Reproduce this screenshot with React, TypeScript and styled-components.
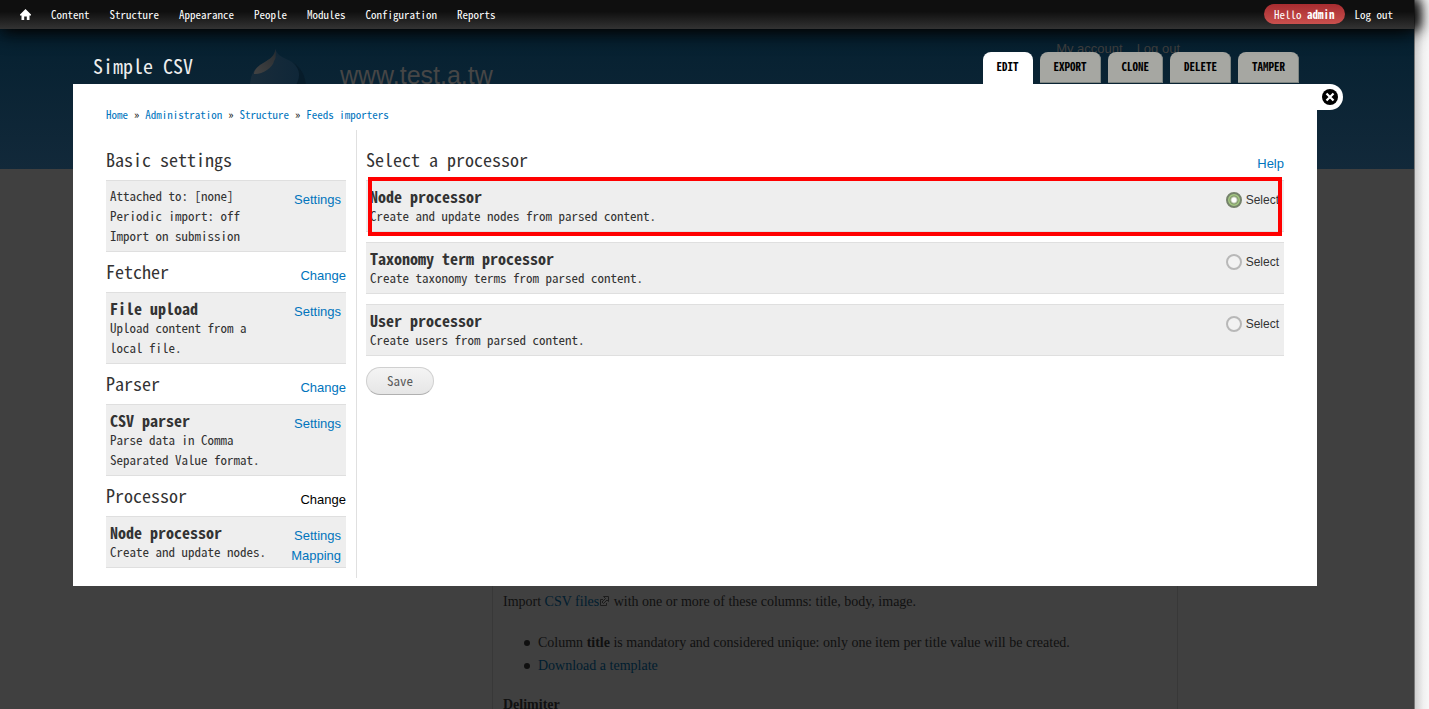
import React from "react";
import styled, { createGlobalStyle, css } from "styled-components";

const mono = `"Noto Sans Mono CJK TC", "Liberation Mono", monospace`;
const sans = `"Liberation Sans", Arial, sans-serif`;
const serif = `"Liberation Serif", "Times New Roman", serif`;
const linkBlue = "#0074bd";

const GlobalStyle = createGlobalStyle`
  * { box-sizing: border-box; }
  body { margin: 0; font-family: ${mono}; font-size: 13px; line-height: 20px; color: #333; }
  a { text-decoration: none; }
  h1, h2, h3, p, ul, ol { margin: 0; padding: 0; font-weight: normal; }
`;

const Shell = styled.div`
  display: flex;
  height: 100vh;
  overflow: hidden;
`;

const Viewport = styled.div`
  position: relative;
  flex: 1;
  min-width: 0;
  background: #404040;
`;

const ScrollTrack = styled.div`
  width: 15px;
  border-left: 1px solid #7a7a7a;
  background: linear-gradient(to right, #cfcfcf, #f0f0f0 60%, #f8f8f8);
`;

/* Admin toolbar */

const Toolbar = styled.nav`
  position: relative;
  z-index: 3;
  display: flex;
  align-items: center;
  justify-content: space-between;
  height: 29px;
  padding: 0 21px 1px 20px;
  background: linear-gradient(#0f0f0f 40%, #333);
  box-shadow: 0 3px 20px #000, 6px 0 12px #111;
  font-size: 11px;
`;

const MenuList = styled.div`
  display: flex;
  align-items: center;
  gap: 20px;
`;

const UserMenu = styled(MenuList)`
  gap: 10px;
`;

const MenuLink = styled.a`
  display: flex;
  color: #fff;
`;

const Greeting = styled.a`
  padding: 0 10px;
  border-radius: 10px;
  background: linear-gradient(#a82c30, #c9504e);
  color: #fff;
  white-space: pre;
`;

/* Dimmed site page under the overlay */

const SiteHeader = styled.header`
  height: 140px;
  background: linear-gradient(#052030, #12293a);
`;

const SiteContainer = styled.div`
  display: flex;
  width: 960px;
  margin: 0 auto;
`;

const Brand = styled.div`
  display: flex;
  flex: 1;
  gap: 32px;
  padding: 20px 0 0 20px;
`;

const SiteName = styled.span`
  padding-top: 10px;
  font-family: ${sans};
  font-size: 25px;
  line-height: 32px;
  color: #464646;
`;

const AccountLinks = styled.div`
  display: flex;
  gap: 14px;
  padding: 10px 7px 0 0;
  font-family: ${sans};
  font-size: 13px;
`;

const AccountLink = styled.a`
  color: #404040;
`;

const SiteContent = styled.main`
  width: 686px;
  margin-left: 265px;
  padding: 421px 10px 0;
  border: solid #383838;
  border-width: 0 1px;
  font-family: ${serif};
  font-size: 14px;
  line-height: 23px;
  color: #101010;
`;

const SiteLink = styled.a`
  color: #001d2f;
`;

const BulletList = styled.ul`
  padding: 18px 0 16px 21px;
  list-style: none;
`;

const BulletItem = styled.li`
  display: flex;
  align-items: center;
  gap: 8px;
  &::before {
    content: "";
    width: 6px;
    height: 6px;
    border-radius: 50%;
    background: #101010;
  }
`;

const SiteHeading = styled.h3`
  font-size: 14px;
  font-weight: bold;
`;

/* Overlay */

const OverlayLayer = styled.div`
  position: absolute;
  z-index: 2;
  top: 29px;
  left: 73px;
  right: 97px;
`;

const OverlayHead = styled.div`
  display: flex;
  align-items: flex-end;
  justify-content: space-between;
  height: 55px;
  padding: 0 18px 0 20px;
`;

const OverlayTitle = styled.h1`
  padding-bottom: 8px;
  font-size: 20px;
  line-height: 20px;
  color: #eee;
`;

const Tabs = styled.div`
  display: flex;
  gap: 7px;
`;

const Tab = styled.a<{ $active?: boolean }>`
  height: 31px;
  margin-bottom: 1px;
  padding: 4px 14px;
  border-radius: 8px 8px 0 0;
  background: #a6a7a2;
  box-shadow: inset -1px -1px 0 #7d8481;
  color: #000;
  font-size: 11px;
  font-weight: bold;
  text-transform: uppercase;
  ${(p) =>
    p.$active &&
    css`
      height: 32px;
      margin-bottom: 0;
      background: #fff;
      box-shadow: none;
    `}
`;

const OverlayBody = styled.div`
  position: relative;
  padding: 20px 33px 8px;
  background: #fff;
`;

const CloseButton = styled.button`
  position: absolute;
  top: 0;
  left: 100%;
  display: flex;
  align-items: center;
  width: 26px;
  height: 26px;
  padding: 0 0 0 5px;
  border: 0;
  border-radius: 0 13px 13px 0;
  background: #fff;
`;

const Breadcrumb = styled.nav`
  display: flex;
  gap: 6px;
  margin-bottom: 6px;
  font-size: 11px;
  color: #000;
`;

const CrumbLink = styled.a`
  color: ${linkBlue};
`;

const Columns = styled.div`
  display: flex;
`;

const Sidebar = styled.aside`
  width: 251px;
  padding: 10px 10px 10px 0;
  border-right: 1px solid #e0e0e0;
`;

const Main = styled.form`
  flex: 1;
  padding: 10px 0 0 9px;
`;

const SectionHead = styled.div`
  display: flex;
  align-items: center;
  justify-content: space-between;
  height: 40px;
`;

const SectionTitle = styled.h2`
  padding-bottom: 2px;
  font-size: 18px;
  line-height: 20px;
`;

const ActionLink = styled.a<{ $current?: boolean }>`
  font-family: ${sans};
  font-size: 13px;
  color: ${(p) => (p.$current ? "#000" : linkBlue)};
`;

const HeadAction = styled(ActionLink)`
  padding-top: 8px;
`;

const Box = styled.div`
  position: relative;
  display: flex;
  justify-content: space-between;
  padding: 5px 4px;
  border: solid #dfdfdf;
  border-width: 1px 0;
  background: #eee;
`;

const BoxText = styled.div`
  white-space: pre-line;
`;

const BoxTitle = styled.h3`
  font-size: 16px;
  font-weight: bold;
  line-height: 20px;
`;

const BoxActions = styled.div`
  display: flex;
  flex-direction: column;
  align-items: flex-end;
  padding: 4px 1px 0 0;
  height: 40px;
`;

const Options = styled.div`
  display: flex;
  flex-direction: column;
  gap: 10px;
  margin-bottom: 11px;
`;

const Highlight = styled.div`
  position: absolute;
  inset: -4px 2px -5px 2px;
  border: 4px solid #f00;
  pointer-events: none;
`;

const RadioLabel = styled.label`
  display: flex;
  align-items: flex-start;
  gap: 4px;
  padding: 4px 1px 0 0;
  font-family: ${sans};
  font-size: 12px;
`;

const Radio = styled.input`
  appearance: none;
  width: 16px;
  height: 16px;
  margin: 2px 0 0;
  border: 2px solid #b8b8b8;
  border-radius: 50%;
  background: #f2f2f2;
  &:checked {
    border-color: #75826b;
    background: radial-gradient(circle, #fff 2px, #7f9668 4px, #a5c883 5px);
  }
`;

const SaveButton = styled.button`
  height: 28px;
  padding: 0 20px;
  border: 1px solid #d0d0d0;
  border-bottom-color: #b0b0b0;
  border-radius: 14px;
  background: linear-gradient(#f4f4f4, #e6e6e6);
  color: #5a5a5a;
  font-family: ${mono};
  font-size: 13px;
  line-height: 20px;
`;

const HomeIcon = () => (
  <svg width="11" height="11" viewBox="0 0 11 11" fill="#fff" aria-label="Home">
    <path d="M5.5 0 0 5.4v1h1.5V11h2.7V7.4h2.6V11h2.7V6.4H11v-1z" />
  </svg>
);

const Druplet = () => (
  <svg width="61" height="70" viewBox="0 0 61 70" aria-hidden="true">
    <defs>
      <linearGradient id="drop" x1="0" y1="0" x2="1" y2="0">
        <stop offset="0" stopColor="#192c3a" />
        <stop offset="1" stopColor="#0e2638" />
      </linearGradient>
      <linearGradient id="shine" x1="1" y1="0" x2="0" y2="1">
        <stop offset="0" stopColor="#282d31" />
        <stop offset="1" stopColor="#434343" />
      </linearGradient>
    </defs>
    <path
      d="M28.500 0C30 7 38 9 45 13C54 18 59 27 59 38C59 56 46 68 31 68S3 56 3 38C3 28 6 21 13 16C21 11 27 9 28.500 0z"
      fill="url(#drop)"
    />
    <path d="M28.500 0C28 8 21 11 13 16C9 19 7 22 7 25C14 26 26 19 27 12C29 10 29 5 28.500 0z" fill="url(#shine)" />
    <path d="M45 13C54 18 59 27 59 38H48C53 30 55 21 45 13z" fill="#071c2a" />
  </svg>
);

const CloseIcon = () => (
  <svg width="16" height="16" viewBox="0 0 16 16" aria-hidden="true">
    <circle cx="8" cy="8" r="8" fill="#000" />
    <path d="M4.5 4.5l7 7m0-7l-7 7" stroke="#fff" strokeWidth="2.2" />
  </svg>
);

const ExternalIcon = () => (
  <svg width="11" height="10" viewBox="1 0 11 10" fill="none" stroke="#1c1c1c" aria-hidden="true">
    <path d="M5 3.5H2.5v6h6V7M5.5 .5h5v5L9 4 5.5 7.5 4 6 7.5 2.5z" />
  </svg>
);

const menu = ["Content", "Structure", "Appearance", "People", "Modules", "Configuration", "Reports"];
const tabs = ["Edit", "Export", "Clone", "Delete", "Tamper"];
const crumbs = ["Home", "Administration", "Structure", "Feeds importers"];

const sections = [
  {
    heading: "Basic settings",
    text: "Attached to: [none]\nPeriodic import: off\nImport on submission",
    actions: ["Settings"],
  },
  {
    heading: "Fetcher",
    change: true,
    title: "File upload",
    text: "Upload content from a\nlocal file.",
    actions: ["Settings"],
  },
  {
    heading: "Parser",
    change: true,
    title: "CSV parser",
    text: "Parse data in Comma\nSeparated Value format.",
    actions: ["Settings"],
  },
  {
    heading: "Processor",
    change: true,
    current: true,
    title: "Node processor",
    text: "Create and update nodes.",
    actions: ["Settings", "Mapping"],
  },
];

const processors = [
  { title: "Node processor", text: "Create and update nodes from parsed content." },
  { title: "Taxonomy term processor", text: "Create taxonomy terms from parsed content." },
  { title: "User processor", text: "Create users from parsed content." },
];

export default function App() {
  return (
    <Shell>
      <GlobalStyle />
      <Viewport>
        <Toolbar>
          <MenuList>
            <MenuLink href="#home">
              <HomeIcon />
            </MenuLink>
            {menu.map((m) => (
              <MenuLink key={m} href={`#${m}`}>
                {m}
              </MenuLink>
            ))}
          </MenuList>
          <UserMenu>
            <Greeting href="#user">
              Hello <b>admin</b>
            </Greeting>
            <MenuLink href="#logout">Log out</MenuLink>
          </UserMenu>
        </Toolbar>

        <SiteHeader>
          <SiteContainer>
            <Brand>
              <Druplet />
              <SiteName>www.test.a.tw</SiteName>
            </Brand>
            <AccountLinks>
              <AccountLink href="#account">My account</AccountLink>
              <AccountLink href="#logout">Log out</AccountLink>
            </AccountLinks>
          </SiteContainer>
        </SiteHeader>
        <SiteContainer>
          <SiteContent>
            <p>
              Import <SiteLink href="#csv">CSV files</SiteLink>
              <ExternalIcon /> with one or more of these columns: title, body, image.
            </p>
            <BulletList>
              <BulletItem>
                <span>
                  Column <b>title</b> is mandatory and considered unique: only one item per title value will be
                  created.
                </span>
              </BulletItem>
              <BulletItem>
                <SiteLink href="#template">Download a template</SiteLink>
              </BulletItem>
            </BulletList>
            <SiteHeading>Delimiter</SiteHeading>
          </SiteContent>
        </SiteContainer>

        <OverlayLayer>
          <OverlayHead>
            <OverlayTitle>Simple CSV</OverlayTitle>
            <Tabs>
              {tabs.map((t, i) => (
                <Tab key={t} href={`#${t}`} $active={i === 0}>
                  {t}
                </Tab>
              ))}
            </Tabs>
          </OverlayHead>
          <OverlayBody>
            <CloseButton type="button" aria-label="Close overlay">
              <CloseIcon />
            </CloseButton>
            <Breadcrumb>
              {crumbs.map((c, i) => (
                <React.Fragment key={c}>
                  {i > 0 && <span>»</span>}
                  <CrumbLink href={`#${c}`}>{c}</CrumbLink>
                </React.Fragment>
              ))}
            </Breadcrumb>
            <Columns>
              <Sidebar>
                {sections.map((s) => (
                  <section key={s.heading}>
                    <SectionHead>
                      <SectionTitle>{s.heading}</SectionTitle>
                      {s.change && (
                        <HeadAction href="#change" $current={s.current}>
                          Change
                        </HeadAction>
                      )}
                    </SectionHead>
                    <Box>
                      <BoxText>
                        {s.title && <BoxTitle>{s.title}</BoxTitle>}
                        {s.text}
                      </BoxText>
                      <BoxActions>
                        {s.actions.map((a) => (
                          <ActionLink key={a} href={`#${a}`}>
                            {a}
                          </ActionLink>
                        ))}
                      </BoxActions>
                    </Box>
                  </section>
                ))}
              </Sidebar>
              <Main>
                <SectionHead>
                  <SectionTitle>Select a processor</SectionTitle>
                  <HeadAction href="#help">Help</HeadAction>
                </SectionHead>
                <Options>
                  {processors.map((p, i) => (
                    <Box key={p.title}>
                      <BoxText>
                        <BoxTitle>{p.title}</BoxTitle>
                        {p.text}
                      </BoxText>
                      <RadioLabel>
                        <Radio type="radio" name="processor" defaultChecked={i === 0} />
                        Select
                      </RadioLabel>
                      {i === 0 && <Highlight />}
                    </Box>
                  ))}
                </Options>
                <SaveButton type="button">Save</SaveButton>
              </Main>
            </Columns>
          </OverlayBody>
        </OverlayLayer>
      </Viewport>
      <ScrollTrack />
    </Shell>
  );
}
